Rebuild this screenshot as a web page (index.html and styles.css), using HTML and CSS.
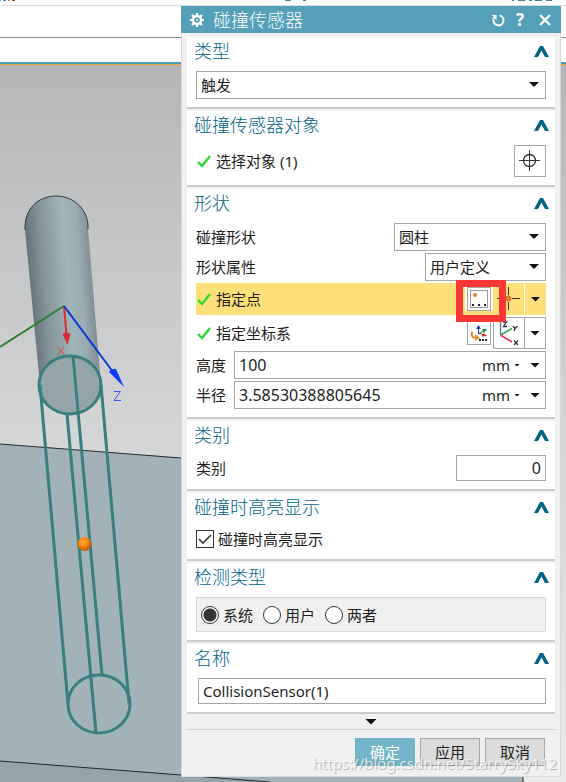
FILE: index.html
```html
<!DOCTYPE html>
<html lang="zh-CN">
<head>
<meta charset="utf-8">
<title>碰撞传感器</title>
<link rel="stylesheet" href="styles.css">
</head>
<body>
<div class="workspace">
  <svg class="scene" aria-hidden="true">
    <defs>
      <linearGradient id="sky" x1="0" y1="0" x2="0" y2="1">
        <stop offset="0" stop-color="#b4b6b8"/>
        <stop offset=".5" stop-color="#d3d4d6"/>
        <stop offset="1" stop-color="#e9eaec"/>
      </linearGradient>
      <linearGradient id="tube" gradientUnits="userSpaceOnUse" x1="29" y1="290" x2="95" y2="285">
        <stop offset="0" stop-color="#647378"/>
        <stop offset=".25" stop-color="#84959b"/>
        <stop offset=".6" stop-color="#a1b5bb"/>
        <stop offset=".8" stop-color="#98abb1"/>
        <stop offset="1" stop-color="#7b8a8f"/>
      </linearGradient>
      <radialGradient id="ball" cx=".4" cy=".35" r=".65">
        <stop offset="0" stop-color="#ffa53c"/>
        <stop offset=".5" stop-color="#f5860f"/>
        <stop offset="1" stop-color="#b85c05"/>
      </radialGradient>
    </defs>
    <rect width="100%" height="62" fill="#fff"/>
    <g shape-rendering="crispEdges">
      <rect x="0" y="0" width="1" height="1" fill="#2aa6dd"/>
      <rect x="3" y="0" width="3" height="1" fill="#2e8aa0"/>
      <rect x="8" y="0" width="2" height="1" fill="#b08a68"/>
      <rect x="12" y="0" width="3" height="1" fill="#804a3a"/>
      <rect x="285" y="0" width="6" height="1" fill="#3b85a3"/>
      <rect x="303" y="0" width="3" height="1" fill="#3b85a3"/>
      <rect x="512" y="0" width="2" height="1" fill="#3b85a3"/>
      <rect x="518" y="0" width="7" height="1" fill="#3b85a3"/>
      <rect x="529" y="0" width="3" height="1" fill="#3b85a3"/>
      <rect x="535" y="0" width="7" height="1" fill="#3b85a3"/>
      <rect x="546" y="0" width="6" height="1" fill="#3b85a3"/>
      <rect y="5" width="100%" height="1" fill="#dcdcdc"/>
      <rect y="37" width="100%" height="1" fill="#879094"/>
      <rect y="62" width="100%" height="2" fill="#4d9db8"/>
      <rect y="64" width="100%" height="1" fill="#f0a040"/>
    </g>
    <rect y="65" width="100%" height="720" fill="url(#sky)"/>
    <path d="M0 444 L181 458 L523 485 V790 H0Z" fill="#a1b3b9"/>
    <path d="M0 761 L181 775 L270 782 V790 H0Z" fill="#93a5aa"/>
    <path d="M0 444 L181 458 M0 761 L181 775 L270 782 M523 776 V790" fill="none" stroke="#222a2c"/>
    <path d="M25 230 C24 209 38 196 56 196 C75 196 89 211 88 229 L101 385 H40Z" fill="url(#tube)"/>
    <path d="M25 230 C24 209 38 196 56 196 C75 196 89 211 88 229" fill="none" stroke="#333b3e"/>
    <ellipse cx="70" cy="385" rx="31" ry="29" fill="#94a5aa"/>
    <g fill="none" stroke="#377f81" stroke-width="3">
      <ellipse cx="70" cy="385" rx="31" ry="29"/>
      <ellipse cx="99" cy="704" rx="31" ry="29"/>
      <path d="M40 385 L68 704 M67 414 L96 733 M73 356 L102 675 M101 385 L129 703"/>
    </g>
    <circle cx="84.500" cy="544" r="7" fill="url(#ball)"/>
    <path d="M64 306 L0 347" stroke="#2a812d" stroke-width="2"/>
    <path d="M64 306 L66.500 335" stroke="#dc2c2c" stroke-width="2"/>
    <path d="M62.500 334 Q66 331 70.500 334 L67.500 345Z" fill="#d82f30"/>
    <path d="M64 306 L113 372" stroke="#0636d8" stroke-width="2"/>
    <path d="M109 372 Q112 368 116 369 L124 387Z" fill="#0b3df5"/>
    <path d="M57.500 346.500 L64.500 355 M64.500 346.500 L57.500 355" stroke="#e04545"/>
    <path d="M114 391.500 H120.500 L114 400.500 H121" fill="none" stroke="#3c5cf0"/>
  </svg>

  <form class="dialog" onsubmit="return false">
    <header class="titlebar">
      <svg class="gear" viewBox="0 0 14 14" aria-hidden="true">
        <circle cx="7" cy="7" r="4" fill="none" stroke="#fff" stroke-width="2.400"/>
        <path d="M7 0V3M7 11V14M0 7H3M11 7H14M2 2L4 4M10 10L12 12M12 2L10 4M4 10L2 12" stroke="#fff" stroke-width="2.200"/>
        <circle cx="7" cy="7" r="1" fill="#e8f3f6"/>
      </svg>
      <h1>碰撞传感器</h1>
      <button type="button" class="tool" aria-label="重置"><svg viewBox="0 0 14 14"><path d="M8.500 2.500 A5 5 0 1 1 2.500 7" fill="none" stroke="#fff" stroke-width="2"/><path d="M.500 2H5.500V7.500L3.500 5.500L1.500 7.500V5L3 4Z" fill="#fff"/></svg></button>
      <button type="button" class="tool help" aria-label="帮助">?</button>
      <button type="button" class="tool" aria-label="关闭"><svg viewBox="0 0 14 14"><path d="M2 2L12 12M12 2L2 12" stroke="#fff" stroke-width="2.400"/></svg></button>
    </header>

    <div class="sections">
      <section>
        <div class="heading"><h2>类型</h2><button type="button" class="fold" aria-label="折叠"><svg viewBox="0 0 15 11"><path d="M0 11L6 0H9L15 11H11L7.500 4.500L4 11Z"/></svg></button></div>
        <div class="body">
          <span class="combo"><select aria-label="类型"><option>触发</option></select></span>
        </div>
      </section>

      <section>
        <div class="heading"><h2>碰撞传感器对象</h2><button type="button" class="fold" aria-label="折叠"><svg viewBox="0 0 15 11"><path d="M0 11L6 0H9L15 11H11L7.500 4.500L4 11Z"/></svg></button></div>
        <div class="body">
          <div class="row tall">
            <svg class="check" viewBox="0 0 14 14"><path d="M1 8L5 12L13 2"/></svg>
            <span class="grow">选择对象 (1)</span>
            <button type="button" class="square big" aria-label="选择对象"><svg viewBox="0 0 30 30"><g fill="none" stroke="#333"><circle cx="14.500" cy="14.500" r="6" stroke-width="1.300"/><path d="M4 14.500H25M14.500 4V25"/></g></svg></button>
          </div>
        </div>
      </section>

      <section>
        <div class="heading"><h2>形状</h2><button type="button" class="fold" aria-label="折叠"><svg viewBox="0 0 15 11"><path d="M0 11L6 0H9L15 11H11L7.500 4.500L4 11Z"/></svg></button></div>
        <div class="body">
          <div class="row">
            <label class="grow" for="shape">碰撞形状</label>
            <span class="combo shape"><select id="shape"><option>圆柱</option></select></span>
          </div>
          <div class="row">
            <label class="grow" for="props">形状属性</label>
            <span class="combo props"><select id="props"><option>用户定义</option></select></span>
          </div>
          <div class="row tall active">
            <svg class="check" viewBox="0 0 14 14"><path d="M1 8L5 12L13 2"/></svg>
            <span class="grow">指定点</span>
            <span class="plate"><button type="button" class="square" aria-label="点对话框"><svg viewBox="0 0 22 22"><rect x="2.500" y="2.500" width="17" height="17" fill="none" stroke="#333" stroke-dasharray="1 1"/><circle cx="7" cy="7" r="2" fill="#e8822a"/><path d="M4 17H6M10 17H12M16 17H18" stroke="#222" stroke-width="2"/></svg></button></span>
            <button type="button" class="flat" aria-label="点类型"><svg viewBox="0 0 30 30"><path d="M3 14.500H11M18 14.500H26M14.500 3V11M14.500 18V26" stroke="#333"/><circle cx="14.500" cy="14.500" r="2.500" fill="#e8822a" stroke="#b86a2a"/></svg></button>
            <button type="button" class="flat more" aria-label="更多点类型"><i class="arrow"></i></button>
            <span class="marker"></span>
          </div>
          <div class="row tall">
            <svg class="check" viewBox="0 0 14 14"><path d="M1 8L5 12L13 2"/></svg>
            <span class="grow">指定坐标系</span>
            <span class="plate"><button type="button" class="square" aria-label="坐标系对话框"><svg viewBox="0 0 22 22"><path d="M10.500 12V4" stroke="#1a3bc0"/><path d="M8 7L10.500 3L13 7Z" fill="#1a3bc0"/><path d="M10.500 12L17 8" stroke="#199030"/><path d="M14 7L19 7L16 11Z" fill="#199030"/><path d="M11 11L17 13.500" stroke="#c22"/><path d="M15 11L19 14L14 14.500Z" fill="#c22"/><path d="M4 10C3 15 5 16 8 16" fill="none" stroke="#e8822a" stroke-width="2"/><path d="M7 12L12 16L7 19Z" fill="#e8922a"/><path d="M11 18H13M14 18H16M17 18H19" stroke="#222" stroke-width="2"/></svg></button></span>
            <button type="button" class="square big" aria-label="坐标系类型"><svg viewBox="0 0 30 30"><path d="M6.500 17V2" stroke="#3585a0" stroke-width="1.300"/><path d="M6.500 17L18 10.500" stroke="#31a044" stroke-width="1.500"/><path d="M6.500 17L18 24" stroke="#e83050" stroke-width="1.500"/><path d="M9 4H12.500L9.500 8.500H13M19 8L21 10.500L23.500 8M21 10.500L20 13M20 22.500L24 27M24 22.500L20 27" fill="none" stroke="#333" stroke-width="1.300"/></svg></button>
            <button type="button" class="square more joined" aria-label="更多坐标系类型"><i class="arrow"></i></button>
          </div>
          <div class="row">
            <label class="name" for="height">高度</label>
            <span class="field"><input id="height" value="100"><button type="button" class="unit">mm<i class="arrow small"></i></button><button type="button" class="unit drop" aria-label="高度选项"><i class="arrow"></i></button></span>
          </div>
          <div class="row">
            <label class="name" for="radius">半径</label>
            <span class="field"><input id="radius" value="3.58530388805645"><button type="button" class="unit">mm<i class="arrow small"></i></button><button type="button" class="unit drop" aria-label="半径选项"><i class="arrow"></i></button></span>
          </div>
        </div>
      </section>

      <section>
        <div class="heading"><h2>类别</h2><button type="button" class="fold" aria-label="折叠"><svg viewBox="0 0 15 11"><path d="M0 11L6 0H9L15 11H11L7.500 4.500L4 11Z"/></svg></button></div>
        <div class="body">
          <div class="row short">
            <label class="grow" for="category">类别</label>
            <input class="box number" id="category" value="0">
          </div>
        </div>
      </section>

      <section>
        <div class="heading"><h2>碰撞时高亮显示</h2><button type="button" class="fold" aria-label="折叠"><svg viewBox="0 0 15 11"><path d="M0 11L6 0H9L15 11H11L7.500 4.500L4 11Z"/></svg></button></div>
        <div class="body">
          <label class="option"><span class="tick"><input type="checkbox" checked><svg viewBox="0 0 18 18"><path d="M3 9L7 13L15 5"/></svg></span>碰撞时高亮显示</label>
        </div>
      </section>

      <section>
        <div class="heading"><h2>检测类型</h2><button type="button" class="fold" aria-label="折叠"><svg viewBox="0 0 15 11"><path d="M0 11L6 0H9L15 11H11L7.500 4.500L4 11Z"/></svg></button></div>
        <div class="body">
          <div class="choices">
            <label class="option"><input type="radio" name="detect" checked>系统</label>
            <label class="option"><input type="radio" name="detect">用户</label>
            <label class="option"><input type="radio" name="detect">两者</label>
          </div>
        </div>
      </section>

      <section>
        <div class="heading"><h2>名称</h2><button type="button" class="fold" aria-label="折叠"><svg viewBox="0 0 15 11"><path d="M0 11L6 0H9L15 11H11L7.500 4.500L4 11Z"/></svg></button></div>
        <div class="body indent">
          <div class="row short"><input class="box title" aria-label="名称" value="CollisionSensor(1)"></div>
        </div>
      </section>
    </div>

    <button type="button" class="expand" aria-label="更多"><i class="arrow wide"></i></button>
    <footer class="actions">
      <button type="submit" class="primary">确定</button>
      <button type="button">应用</button>
      <button type="button">取消</button>
    </footer>
  </form>
  <div class="watermark">https://blog.csdn.net/StarrySky112</div>
</div>
</body>
</html>
```
FILE: styles.css
```css
* {
  box-sizing: border-box;
}

body {
  margin: 0;
  color: #1e1e1e;
  font: 15px/20px "Noto Sans", "Noto Sans CJK SC", sans-serif;
}

button,
input,
select {
  margin: 0;
  padding: 0;
  border: 0;
  border-radius: 0;
  background: none;
  color: inherit;
  font: inherit;
}

h1,
h2 {
  flex: 1;
  margin: 0;
  font-size: 18px;
  font-weight: 300;
  line-height: 24px;
}

svg {
  display: block;
}

.workspace {
  position: relative;
  min-height: 100vh;
  padding: 6px 5px 5px 181px;
  overflow: hidden;
}

.scene {
  position: absolute;
  inset: 0;
  width: 100%;
  height: 100%;
}

.dialog {
  position: relative;
  border-bottom: 1px solid #dcdcdc;
  background: #f0f0f0;
  box-shadow: inset 1px 0 #d8d8d8, inset -1px 0 #d8d8d8;
}

.titlebar {
  display: flex;
  align-items: center;
  height: 27px;
  padding: 0 8px 0 9px;
  background: #54a0b8;
  color: #fff;
}

.gear {
  width: 14px;
  height: 14px;
  margin-right: 9px;
}

.tool {
  display: grid;
  place-items: center;
  width: 16px;
  height: 24px;
  margin-left: 9px;
}

.tool svg {
  width: 14px;
  height: 14px;
}

.tool.help {
  margin-left: 6px;
  font-size: 17px;
  font-weight: 700;
}

.sections {
  display: flex;
  flex-direction: column;
  gap: 2px;
  padding: 4px 6px 0;
}

section {
  border-bottom: 2px solid #cbcbcb;
  background: #fff;
}

.heading {
  display: flex;
  align-items: center;
  height: 28px;
  margin-bottom: 6px;
  padding: 0 6px 0 7px;
  color: #006487;
}

.fold svg {
  width: 15px;
  height: 11px;
}

.fold path {
  fill: #006487;
}

.body {
  display: flex;
  flex-direction: column;
  gap: 2px;
  padding: 0 9px 8px;
}

.indent {
  padding-left: 11px;
}

.row {
  position: relative;
  display: flex;
  align-items: center;
  height: 28px;
}

.tall {
  height: 32px;
}

.short {
  height: 26px;
}

.active {
  background: #ffdf78;
}

.grow {
  flex: 1;
}

.name {
  width: 38px;
}

.check {
  width: 14px;
  height: 14px;
  margin: 0 5px 0 1px;
}

.check path {
  fill: none;
  stroke: #2bdc32;
  stroke-width: 2.4;
}

.combo {
  position: relative;
  display: block;
  height: 28px;
}

.combo select {
  width: 100%;
  height: 28px;
  padding-left: 4px;
  border: 1px solid #a6a6a6;
  background: #fff;
  appearance: none;
}

.combo::after,
.arrow {
  width: 10px;
  height: 5px;
  background: #111;
  clip-path: polygon(0 0, 100% 0, 50% 100%);
}

.combo::after {
  content: "";
  position: absolute;
  top: 11px;
  right: 7px;
  pointer-events: none;
}

.arrow {
  display: block;
}

.small {
  width: 6px;
  height: 3px;
}

.wide {
  width: 12px;
  height: 6px;
}

.shape {
  width: 152px;
}

.props {
  width: 121px;
}

.square {
  display: grid;
  place-items: center;
  width: 24px;
  height: 24px;
  border: 1px solid #a6a6a6;
  background: #fff;
}

.square svg {
  width: 22px;
  height: 22px;
}

.big {
  width: 32px;
  height: 32px;
}

.big svg,
.flat svg {
  width: 30px;
  height: 30px;
}

.flat {
  display: grid;
  place-items: center;
  width: 31px;
  height: 30px;
}

.more {
  width: 22px;
}

.flat.more {
  border-left: 1px solid #fff;
}

.joined {
  height: 32px;
  margin-left: -1px;
}

.plate {
  display: grid;
  place-items: center;
  width: 28px;
  height: 24px;
  background: #fff;
}

.marker {
  position: absolute;
  z-index: 1;
  top: -3px;
  right: 40px;
  width: 50px;
  height: 42px;
  border: 7px solid #fb3737;
  pointer-events: none;
}

.field {
  display: flex;
  flex: 1;
  height: 28px;
  border: 1px solid #a6a6a6;
  background: #fff;
  font-size: 16px;
}

.field input {
  flex: 1;
  min-width: 0;
  padding-left: 4px;
}

.unit {
  display: flex;
  align-items: center;
  gap: 4px;
  font-size: 15px;
}

.drop {
  padding: 0 5px 0 10px;
}

.box {
  height: 26px;
  padding: 0 4px;
  border: 1px solid #a6a6a6;
  background: #fff;
  font-size: 16px;
}

.number {
  width: 90px;
  text-align: right;
}

.title {
  width: 100%;
}

.title.box {
  font-size: 15px;
}

.option {
  display: flex;
  align-items: center;
  gap: 4px;
  height: 24px;
}

.option input {
  width: 18px;
  height: 18px;
  border: 1px solid #333;
  background: #fff;
  appearance: none;
}

.option input[type="radio"] {
  border-radius: 50%;
}

.option input[type="radio"]:checked {
  background: radial-gradient(circle, #333 6px, #fff 7px);
}

.tick {
  position: relative;
  display: grid;
}

.tick svg {
  position: absolute;
  inset: 0;
}

.tick path {
  fill: none;
  stroke: #333;
  stroke-width: 1.6;
}

.choices {
  display: flex;
  align-items: center;
  gap: 10px;
  height: 35px;
  padding: 0 4px;
  border: 1px solid #dadada;
  background: #f0f0f0;
}

.expand {
  display: grid;
  place-items: center;
  width: calc(100% - 12px);
  height: 16px;
  margin: 0 6px;
  border-bottom: 1px solid #d0d0d0;
}

.actions {
  display: flex;
  justify-content: flex-end;
  gap: 5px;
  padding: 8px 16px 10px;
}

.actions button {
  width: 60px;
  height: 28px;
  border: 1px solid #a6a6a6;
  background: #dcdcdc;
}

.actions .primary {
  border-color: #74b4c8;
  background: #74b4c8;
  color: #fff;
}

.watermark {
  position: absolute;
  right: 9px;
  bottom: 9px;
  color: rgba(255, 255, 255, .75);
  font-size: 15px;
  text-shadow: 1px 1px 1px rgba(110, 110, 110, .5);
  pointer-events: none;
}
```
